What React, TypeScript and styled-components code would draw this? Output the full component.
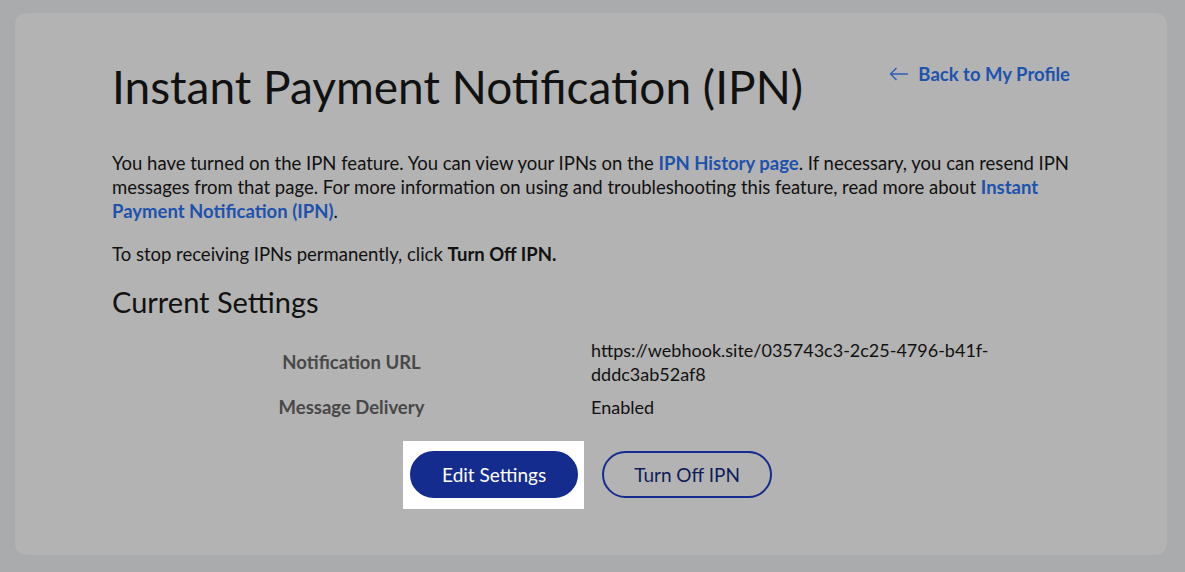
import styled, { createGlobalStyle } from 'styled-components';

const GlobalStyle = createGlobalStyle`
  html, body {
    margin: 0;
    padding: 0;
    background: #aaabad;
    font-family: Lato, "Noto Sans", Arial, sans-serif;
  }
`;

const Page = styled.div`
  width: 1185px;
  height: 572px;
  box-sizing: border-box;
  padding: 13px 18px 17px 15px;
`;

const Card = styled.section`
  height: 100%;
  box-sizing: border-box;
  background: #b3b3b3;
  border-radius: 12px;
  padding: 40px 97px 0 97px;
  color: #111;
`;

const Header = styled.div`
  display: flex;
  justify-content: space-between;
  align-items: flex-start;
`;

const Title = styled.h1`
  margin: 4px 0 0;
  font-size: 46px;
  font-weight: 400;
  line-height: 60px;
  color: #111;
`;

const BackLink = styled.a`
  display: flex;
  align-items: center;
  gap: 9px;
  margin-top: 10px;
  font-size: 18.5px;
  font-weight: 700;
  color: #1d52ad;
  text-decoration: none;
`;

const Intro = styled.div`
  margin-top: 34px;
`;

const Paragraph = styled.p`
  margin: 0;
  font-size: 18.5px;
  line-height: 24px;
  & + & {
    margin-top: 19px;
  }
`;

const Link = styled.a`
  color: #1d52ad;
  font-weight: 700;
  text-decoration: none;
`;

const SectionTitle = styled.h2`
  margin: 19px 0 0;
  font-size: 29px;
  font-weight: 400;
  line-height: 34px;
`;

const SettingsGrid = styled.dl`
  display: grid;
  grid-template-columns: 1fr 1fr;
  row-gap: 9px;
  margin: 19px 0 0;
`;

const Label = styled.dt`
  display: flex;
  align-items: center;
  justify-content: center;
  font-size: 18.5px;
  font-weight: 700;
  color: #484848;
`;

const Value = styled.dd`
  margin: 0;
  padding-right: 70px;
  font-size: 18px;
  line-height: 24px;
  word-break: break-word;
`;

const Actions = styled.div`
  display: flex;
  justify-content: center;
  align-items: center;
  gap: 24px;
  margin-top: 32px;
`;

/* white highlight around the focused button; negative margins keep the buttons centred */
const Spotlight = styled.div`
  display: flex;
  background: #fff;
  padding: 10px 6px 11px 7px;
  margin: -10px -6px -11px -7px;
`;

const Button = styled.button<{ $primary?: boolean }>`
  height: 47px;
  padding: 0 30px;
  border-radius: 24px;
  font-family: inherit;
  font-size: 19px;
  cursor: pointer;
  border: 2px solid #142c8e;
  background: ${(p) => (p.$primary ? '#142c8e' : 'transparent')};
  color: ${(p) => (p.$primary ? '#fff' : '#0e1d5a')};
`;

export default function App() {
  return (
    <Page>
      <GlobalStyle />
      <Card>
        <Header>
          <Title>Instant Payment Notification (IPN)</Title>
          <BackLink href="#">
            <svg width="20" height="14" viewBox="0 0 20 14" fill="none" stroke="#2c5fb8" strokeWidth="1.4">
              <path d="M19 7H1.5M7.5 1L1.5 7l6 6" />
            </svg>
            Back to My Profile
          </BackLink>
        </Header>
        <Intro>
          <Paragraph>
            You have turned on the IPN feature. You can view your IPNs on the <Link href="#">IPN History page</Link>. If
            necessary, you can resend IPN messages from that page. For more information on using and troubleshooting
            this feature, read more about <Link href="#">Instant Payment Notification (IPN)</Link>.
          </Paragraph>
          <Paragraph>
            To stop receiving IPNs permanently, click <b>Turn Off IPN.</b>
          </Paragraph>
        </Intro>
        <SectionTitle>Current Settings</SectionTitle>
        <SettingsGrid>
          <Label>Notification URL</Label>
          <Value>https://webhook.site/035743c3-2c25-4796-b41f-dddc3ab52af8</Value>
          <Label>Message Delivery</Label>
          <Value>Enabled</Value>
        </SettingsGrid>
        <Actions>
          <Spotlight>
            <Button $primary>Edit Settings</Button>
          </Spotlight>
          <Button>Turn Off IPN</Button>
        </Actions>
      </Card>
    </Page>
  );
}
